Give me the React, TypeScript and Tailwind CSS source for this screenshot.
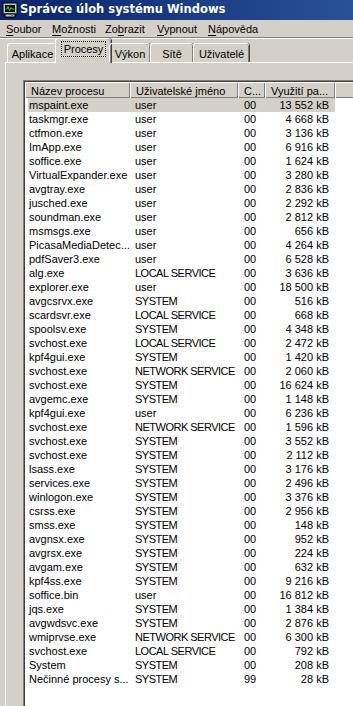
import { Fragment } from "react";

type Proc = { name: string; user: string; cpu: string; mem: string };

const rows: Proc[] = [
  ["mspaint.exe", "user", "00", "13 552 kB"],
  ["taskmgr.exe", "user", "00", "4 668 kB"],
  ["ctfmon.exe", "user", "00", "3 136 kB"],
  ["ImApp.exe", "user", "00", "6 916 kB"],
  ["soffice.exe", "user", "00", "1 624 kB"],
  ["VirtualExpander.exe", "user", "00", "3 280 kB"],
  ["avgtray.exe", "user", "00", "2 836 kB"],
  ["jusched.exe", "user", "00", "2 292 kB"],
  ["soundman.exe", "user", "00", "2 812 kB"],
  ["msmsgs.exe", "user", "00", "656 kB"],
  ["PicasaMediaDetec...", "user", "00", "4 264 kB"],
  ["pdfSaver3.exe", "user", "00", "6 528 kB"],
  ["alg.exe", "LOCAL SERVICE", "00", "3 636 kB"],
  ["explorer.exe", "user", "00", "18 500 kB"],
  ["avgcsrvx.exe", "SYSTEM", "00", "516 kB"],
  ["scardsvr.exe", "LOCAL SERVICE", "00", "668 kB"],
  ["spoolsv.exe", "SYSTEM", "00", "4 348 kB"],
  ["svchost.exe", "LOCAL SERVICE", "00", "2 472 kB"],
  ["kpf4gui.exe", "SYSTEM", "00", "1 420 kB"],
  ["svchost.exe", "NETWORK SERVICE", "00", "2 060 kB"],
  ["svchost.exe", "SYSTEM", "00", "16 624 kB"],
  ["avgemc.exe", "SYSTEM", "00", "1 148 kB"],
  ["kpf4gui.exe", "user", "00", "6 236 kB"],
  ["svchost.exe", "NETWORK SERVICE", "00", "1 596 kB"],
  ["svchost.exe", "SYSTEM", "00", "3 552 kB"],
  ["svchost.exe", "SYSTEM", "00", "2 112 kB"],
  ["lsass.exe", "SYSTEM", "00", "3 176 kB"],
  ["services.exe", "SYSTEM", "00", "2 496 kB"],
  ["winlogon.exe", "SYSTEM", "00", "3 376 kB"],
  ["csrss.exe", "SYSTEM", "00", "2 956 kB"],
  ["smss.exe", "SYSTEM", "00", "148 kB"],
  ["avgnsx.exe", "SYSTEM", "00", "952 kB"],
  ["avgrsx.exe", "SYSTEM", "00", "224 kB"],
  ["avgam.exe", "SYSTEM", "00", "632 kB"],
  ["kpf4ss.exe", "SYSTEM", "00", "9 216 kB"],
  ["soffice.bin", "user", "00", "16 812 kB"],
  ["jqs.exe", "SYSTEM", "00", "1 384 kB"],
  ["avgwdsvc.exe", "SYSTEM", "00", "2 876 kB"],
  ["wmiprvse.exe", "NETWORK SERVICE", "00", "6 300 kB"],
  ["svchost.exe", "LOCAL SERVICE", "00", "792 kB"],
  ["System", "SYSTEM", "00", "208 kB"],
  ["Nečinné procesy s...", "SYSTEM", "99", "28 kB"],
].map(([name, user, cpu, mem]) => ({ name, user, cpu, mem }));

const menu = [
  { pre: "", key: "S", post: "oubor", w: "w-[46px]" },
  { pre: "", key: "M", post: "ožnosti", w: "w-[53px]" },
  { pre: "Zo", key: "b", post: "razit", w: "w-[52px]" },
  { pre: "", key: "V", post: "ypnout", w: "w-[51px]" },
  { pre: "", key: "N", post: "ápověda", w: "w-[60px]" },
];

const tabs = [
  { label: "Aplikace", w: "w-[50px]" },
  { label: "Procesy", w: "w-[51px]", active: true },
  { label: "Výkon", w: "w-[41px]" },
  { label: "Sítě", w: "w-[43px]" },
  { label: "Uživatelé", w: "w-[56px]" },
];

function AppIcon() {
  return (
    <svg width="16" height="16" viewBox="0 0 16 16" className="shrink-0">
      <rect x="1" y="1" width="14" height="11" fill="#c0c0c0" stroke="#000" strokeWidth="1" />
      <rect x="3" y="3" width="10" height="7" fill="#000" />
      <polyline points="3.5,7 5,7 6,4.5 7.5,8.5 9,5.5 10,7 12.5,7" fill="none" stroke="#00ff00" strokeWidth="1" />
      <rect x="3" y="12" width="10" height="3" fill="#c0c0c0" stroke="#000" strokeWidth="1" />
      <rect x="9" y="13" width="2" height="1" fill="#00c000" />
    </svg>
  );
}

export default function App() {
  return (
    <div
      className="h-[706px] w-[353px] overflow-hidden bg-[#d4d0c8] text-[11px] text-black"
      style={{ fontFamily: '"Liberation Sans", Arial, sans-serif' }}
    >
      <div className="w-[420px]">
        {/* title bar */}
        <div className="flex h-[20px] items-center gap-[2px] bg-linear-to-r from-[#0a246a] to-[#2f5aa4] pl-[2px]">
          <AppIcon />
          <span
            className="text-[11.5px] font-bold text-white"
            style={{ fontFamily: '"DejaVu Sans", Verdana, sans-serif' }}
          >
            Správce úloh systému Windows
          </span>
        </div>

        {/* menu */}
        <div className="flex h-[17px] items-center pl-[6px] pt-[1px]">
          {menu.map((m) => (
            <span key={m.key} className={m.w}>
              {m.pre}
              <span className="underline underline-offset-[2px]">{m.key}</span>
              {m.post}
            </span>
          ))}
        </div>
        <div className="h-px bg-[#808080]" />
        <div className="h-px bg-white" />

        {/* tabs */}
        <div className="relative z-10 flex h-[23px] items-end pl-[7px]">
          {tabs.map((t) =>
            t.active ? (
              <div
                key={t.label}
                className={`-mx-[2px] -mb-px flex h-[22px] ${t.w} box-content items-start justify-center rounded-t-[3px] border-l border-t border-white bg-[#d4d0c8] px-[2px] pt-[2px] shadow-[inset_-1px_0_0_#808080,1px_0_0_#404040]`}
              >
                <span className="border border-dotted border-black px-[2px] leading-[14px]">{t.label}</span>
              </div>
            ) : (
              <div
                key={t.label}
                className={`flex h-[19px] ${t.w} items-start justify-center rounded-t-[3px] border-l border-t border-white pt-[3px] shadow-[inset_-1px_0_0_#808080,1px_0_0_#404040] leading-[14px]`}
              >
                {t.label}
              </div>
            )
          )}
        </div>

        {/* panel */}
        <div className="ml-[5px] border-l border-t border-white pl-[17px] pt-[17px]">
          <div className="border-l border-t border-[#808080]">
            <div className="h-[640px] border-l border-t border-[#404040] bg-white">
              <div className="flex h-[16px] leading-[14px]">
                <HeaderCell w="w-[105px]" label="Název procesu" />
                <HeaderCell w="w-[108px]" label="Uživatelské jméno" />
                <HeaderCell w="w-[27px]" label="C..." />
                <HeaderCell w="w-[70px]" label="Využití pa..." />
                <HeaderCell w="w-[80px]" label="" />
              </div>
              {rows.map((r, i) => (
                <div key={i} className="flex h-[14px] pl-[3px] leading-[14px]">
                  <div className={`flex ${i === 0 ? "bg-[#d4d0c8]" : ""}`}>
                    <div className="w-[102px] overflow-hidden pl-px whitespace-nowrap">{r.name}</div>
                    <div
                      className={`w-[108px] overflow-hidden pl-[5px] whitespace-nowrap ${
                        r.user === "user" ? "" : "tracking-[-0.5px]"
                      }`}
                    >
                      {r.user}
                    </div>
                    <div className="w-[27px] pl-[6px]">{r.cpu}</div>
                    <div className="w-[70px] pr-[6px] text-right whitespace-nowrap">{r.mem}</div>
                  </div>
                </div>
              ))}
            </div>
          </div>
        </div>
      </div>
    </div>
  );
}

function HeaderCell({ w, label }: { w: string; label: string }) {
  return (
    <div
      className={`${w} shrink-0 overflow-hidden whitespace-nowrap border-l border-t border-white bg-[#d4d0c8] pl-[5px] pt-px shadow-[inset_-1px_-1px_0_#808080,inset_0_-1px_0_#404040]`}
    >
      {label ? <Fragment>{label}</Fragment> : null}
    </div>
  );
}
